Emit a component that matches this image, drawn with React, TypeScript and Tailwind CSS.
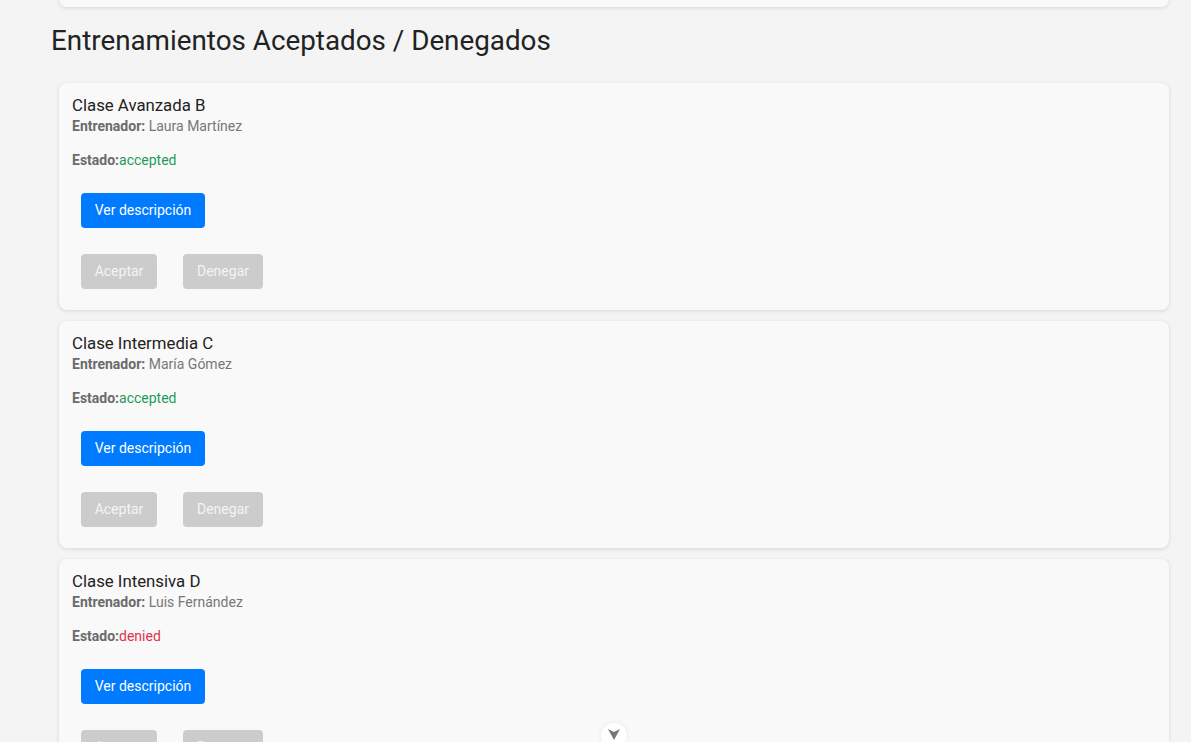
import React from 'react';

type Training = {
  title: string;
  coach: string;
  status: 'accepted' | 'denied';
};

const trainings: Training[] = [
  { title: 'Clase Avanzada B', coach: 'Laura Martínez', status: 'accepted' },
  { title: 'Clase Intermedia C', coach: 'María Gómez', status: 'accepted' },
  { title: 'Clase Intensiva D', coach: 'Luis Fernández', status: 'denied' },
];

const TrainingCard = ({ title, coach, status }: Training) => (
  <div className="mx-2 mb-[11px] rounded-lg bg-[#f9f9f9] px-[13px] pb-[21px] pt-[12px] shadow-[0_1px_4px_rgba(0,0,0,0.12)]">
    <h3 className="text-[16.8px] leading-[21px] text-[#222]">{title}</h3>
    <p className="text-[14px] leading-[20px] text-[#777]">
      <strong className="font-bold text-[#6b6b6b]">Entrenador:</strong> {coach}
    </p>
    <p className="mt-[14px] text-[14px] leading-[20px]">
      <strong className="font-bold text-[#6b6b6b]">Estado:</strong>
      <span className={status === 'accepted' ? 'text-[#1e9a5a]' : 'text-[#e0314b]'}>
        {status}
      </span>
    </p>
    <button className="ml-[9px] mt-[23px] h-[35px] w-[124px] rounded-[4px] bg-[#007bff] text-[14px] text-white">
      Ver descripción
    </button>
    <div className="ml-[9px] mt-[26px] flex gap-[26px]">
      <button
        disabled
        className="h-[35px] w-[76px] rounded-[4px] bg-[#cccccc] text-[14px] text-[#f4f4f4]"
      >
        Aceptar
      </button>
      <button
        disabled
        className="h-[35px] w-[80px] rounded-[4px] bg-[#cccccc] text-[14px] text-[#f4f4f4]"
      >
        Denegar
      </button>
    </div>
  </div>
);

export default function App() {
  return (
    <div
      className="h-[742px] overflow-hidden bg-[#f4f4f4] pl-[51px] pr-[14px]"
      style={{ fontFamily: 'Roboto, "Noto Sans", sans-serif' }}
    >
      {/* previous section, scrolled out of view */}
      <div className="mx-2 -mt-[100px] h-[107px] rounded-lg bg-[#f9f9f9] shadow-[0_1px_4px_rgba(0,0,0,0.12)]" />

      <h2 className="mb-[25px] mt-[17px] text-[27.8px] leading-[34px] text-[#222]">
        Entrenamientos Aceptados / Denegados
      </h2>

      {trainings.map((t) => (
        <TrainingCard key={t.title} {...t} />
      ))}

      <button className="fixed left-[601px] top-[723px] flex h-[26px] w-[26px] items-start justify-center rounded-full bg-white pt-[6px] shadow-[0_0_4px_rgba(0,0,0,0.08)]">
        <svg width="12" height="11" viewBox="0 0 12 11">
          <path d="M0 0 L6 3 L12 0 L6 11 Z" fill="#777" />
        </svg>
      </button>
    </div>
  );
}
